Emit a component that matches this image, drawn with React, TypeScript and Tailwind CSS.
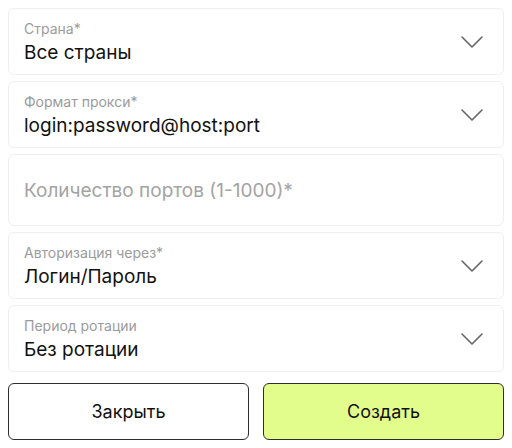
import { useState } from "react";

type Field = {
  label: string;
  value: string;
};

const selects: Field[] = [
  { label: "Страна*", value: "Все страны" },
  { label: "Формат прокси*", value: "login:password@host:port" },
];

const selects2: Field[] = [
  { label: "Авторизация через*", value: "Логин/Пароль" },
  { label: "Период ротации", value: "Без ротации" },
];

function Chevron() {
  return (
    <svg width="24" height="14" viewBox="0 0 24 14" fill="none" className="mb-[2px] shrink-0">
      <path d="M2 2L12 12L22 2" stroke="#666666" strokeWidth="1.6" strokeLinecap="round" strokeLinejoin="round" />
    </svg>
  );
}

function SelectBox({ label, value }: Field) {
  return (
    <div className="flex h-[67px] items-center justify-between rounded-[6px] border border-[#efefef] bg-white pl-[15px] pr-[19px] pt-[2px]">
      <div className="flex flex-col">
        <span className="text-[14px] leading-[18px] text-[#9b9b9b]">{label}</span>
        <span className="mt-[2px] text-[19px] leading-[25px] text-[#111111]">{value}</span>
      </div>
      <Chevron />
    </div>
  );
}

export default function App() {
  const [ports, setPorts] = useState("");

  return (
    <div className="min-h-screen bg-white px-2 pt-2 font-['Inter',sans-serif]">
      <div className="flex w-[496px] flex-col gap-[6px]">
        {selects.map((f) => (
          <SelectBox key={f.label} {...f} />
        ))}
        <div className="flex h-[72px] items-center rounded-[6px] border border-[#efefef] bg-white px-[15px] pt-[2px]">
          <input
            value={ports}
            onChange={(e) => setPorts(e.target.value)}
            placeholder="Количество портов (1-1000)*"
            className="w-full bg-transparent text-[19px] text-[#111111] outline-none placeholder:text-[#a3a3a3]"
          />
        </div>
        {selects2.map((f) => (
          <SelectBox key={f.label} {...f} />
        ))}
      </div>
      <div className="mt-[11px] grid w-[496px] grid-cols-2 gap-[14px]">
        <button className="h-[57px] rounded-[6px] border border-[#2e2e2e] bg-white text-[18px] text-[#111111]">
          Закрыть
        </button>
        <button className="h-[57px] rounded-[6px] border border-[#2e2e2e] bg-[#e3fd8c] text-[18px] text-[#111111]">
          Создать
        </button>
      </div>
    </div>
  );
}
